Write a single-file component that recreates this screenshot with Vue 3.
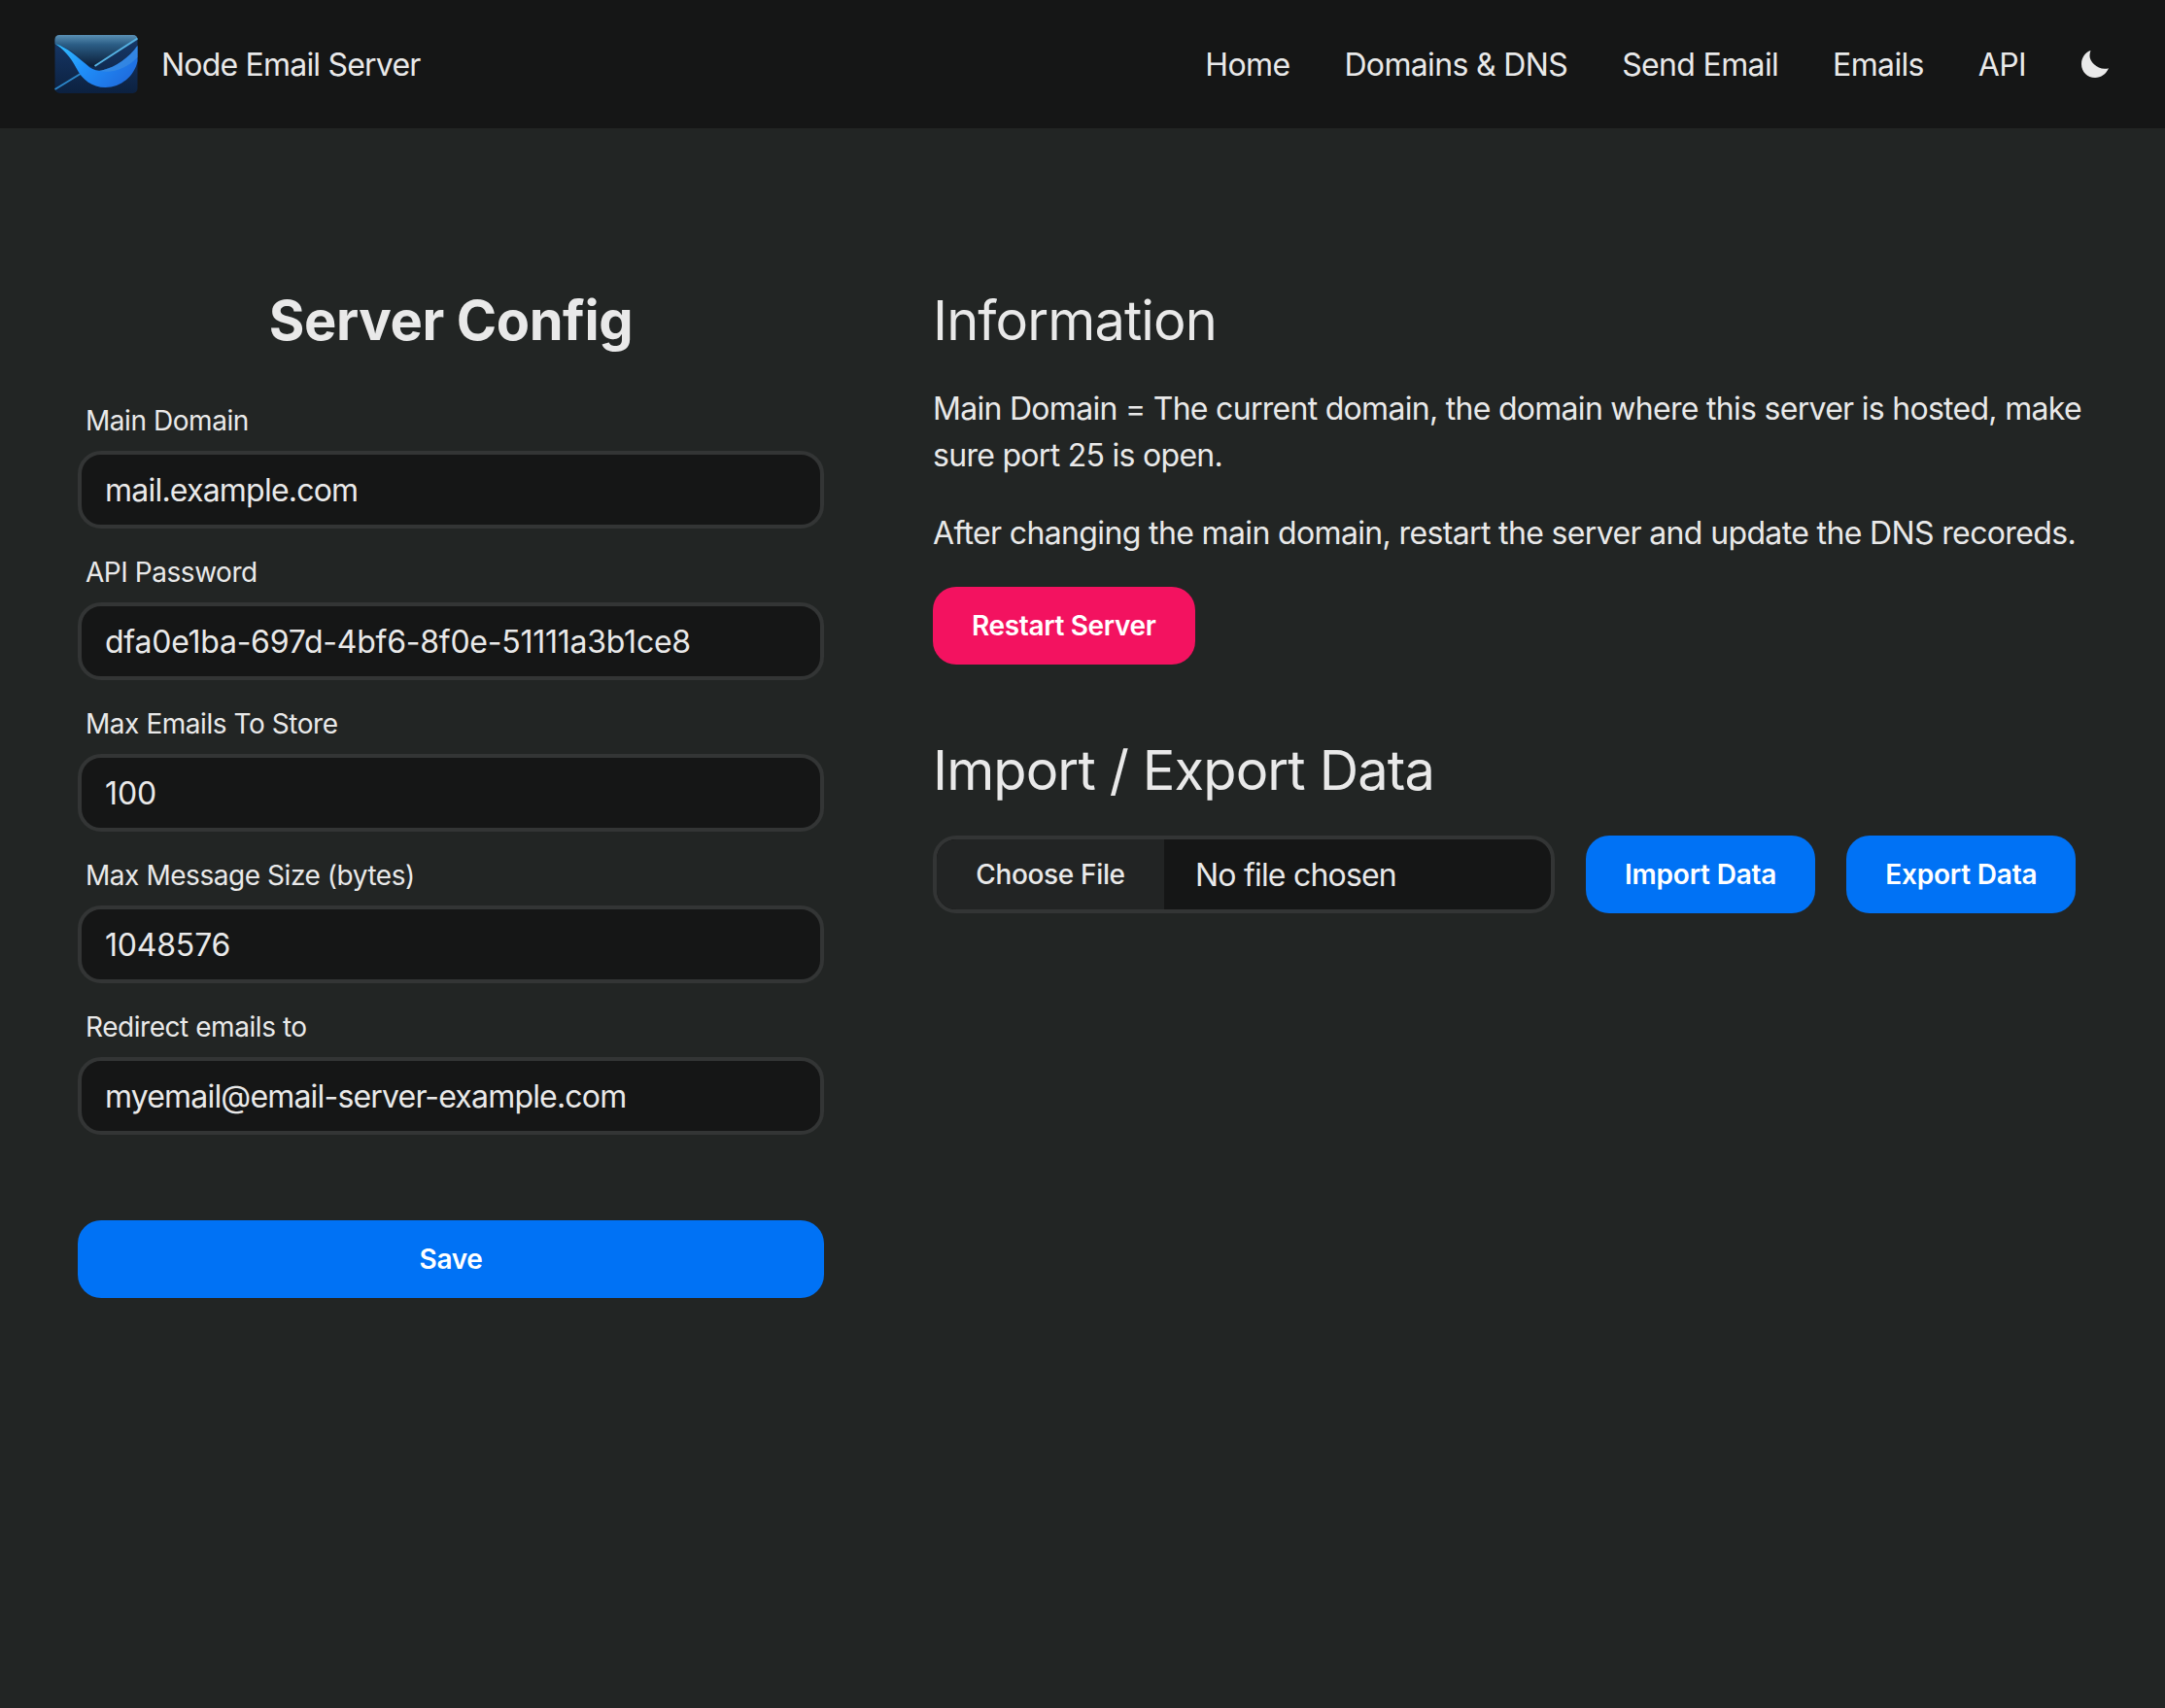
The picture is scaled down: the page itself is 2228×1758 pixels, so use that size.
<script setup>
const fields = [
  { label: 'Main Domain', value: 'mail.example.com', spacing: -0.78 },
  { label: 'API Password', value: 'dfa0e1ba-697d-4bf6-8f0e-51111a3b1ce8', spacing: -0.24 },
  { label: 'Max Emails To Store', value: '100', spacing: -0.13 },
  { label: 'Max Message Size (bytes)', value: '1048576', spacing: -0.2 },
  { label: 'Redirect emails to', value: 'myemail@email-server-example.com', spacing: -0.82 },
]
const links = ['Home', 'Domains & DNS', 'Send Email', 'Emails', 'API']
</script>

<template>
  <div class="page">
    <header class="nav">
      <a class="brand">
        <svg class="logo" viewBox="0 0 85 60" width="86" height="60">
          <defs>
            <linearGradient id="flap" x1="0" y1="0" x2="0" y2="1">
              <stop offset="0" stop-color="#5a90b4" />
              <stop offset="0.3" stop-color="#2b5d85" />
              <stop offset="1" stop-color="#0a1c36" />
            </linearGradient>
            <linearGradient id="body" x1="0" y1="0" x2="0" y2="1">
              <stop offset="0" stop-color="#17396a" />
              <stop offset="1" stop-color="#0c2140" />
            </linearGradient>
            <linearGradient id="swoosh" x1="0" y1="0" x2="1" y2="0.5">
              <stop offset="0" stop-color="#35c4ff" />
              <stop offset="0.5" stop-color="#1f8ffa" />
              <stop offset="1" stop-color="#1f6fe0" />
            </linearGradient>
          </defs>
          <rect width="85" height="60" rx="5" fill="url(#body)" />
          <path d="M0 5 Q0 0 5 0 H80 Q85 0 85 5 L41 33 Q36 33 32 30 Q18 14 0 9Z" fill="url(#flap)" />
          <path d="M0 56 L27 39.500" stroke="#2c86c8" stroke-width="2" fill="none" />
          <path d="M41 32 L85 3.500" stroke="#56b4e6" stroke-width="2" fill="none" />
          <path d="M0 9C14 13 24 24 32 30C38 36 44 38 50 36C62 33 76 24 85 11V27C82 42 68 54 52 54C38 54 28 46 22 34C16 22 8 14 0 9Z" fill="url(#swoosh)" />
          <path d="M50 36C62 33 76 24 85 11V23C74 34 60 40 46 37Z" fill="#3f8fe0" opacity="0.6" />
        </svg>
        <span class="brand-name">Node Email Server</span>
      </a>
      <nav class="links">
        <a v-for="link in links" :key="link" class="link">{{ link }}</a>
        <svg class="moon" viewBox="0 0 28 28" width="28" height="28">
          <path d="M9.500 0C3.800 1.800 0 7.500 0 14c0 8 6.200 14 14 14 6.200 0 11.500-4 14-9.800-1.200.4-2.500.5-4 .5C15.500 18.700 8.500 11.500 8.500 5.500c0-2 .3-3.800 1-5.500Z" fill="#e9e9e9" />
        </svg>
      </nav>
    </header>

    <main class="content">
      <section class="config">
        <h1 class="config-title">Server Config</h1>
        <div v-for="field in fields" :key="field.label" class="field">
          <label class="label">{{ field.label }}</label>
          <div class="input" :style="{ letterSpacing: field.spacing + 'px' }">{{ field.value }}</div>
        </div>
        <button class="btn btn-blue btn-save">Save</button>
      </section>

      <section class="info">
        <h2 class="heading">Information</h2>
        <p class="para para-first">Main Domain = The current domain, the domain where this server is hosted, make sure port 25 is open.</p>
        <p class="para para-last">After changing the main domain, restart the server and update the DNS recoreds.</p>
        <button class="btn btn-pink">Restart Server</button>
        <h2 class="heading heading-import">Import / Export Data</h2>
        <div class="data-row">
          <div class="file">
            <span class="file-button">Choose File</span>
            <span class="file-name">No file chosen</span>
          </div>
          <button class="btn btn-blue">Import Data</button>
          <button class="btn btn-blue">Export Data</button>
        </div>
      </section>
    </main>
  </div>
</template>

<style scoped>
.page {
  min-height: 1758px;
  background: #222524;
  color: #e9e9e9;
  font-family: Inter, "Liberation Sans", sans-serif;
  font-size: 32px;
}
.nav {
  height: 132px;
  box-sizing: border-box;
  background: #151616;
  padding: 0 58px 0 56px;
  display: flex;
  align-items: center;
  justify-content: space-between;
}
.brand {
  display: flex;
  align-items: center;
  gap: 24px;
}
.logo {
  display: block;
}
.brand-name {
  padding-top: 2px;
  font-size: 32px;
  line-height: 48px;
  letter-spacing: -0.8px;
}
.links {
  display: flex;
  align-items: center;
  gap: 56px;
}
.link {
  padding-top: 2px;
  font-size: 32px;
  line-height: 48px;
  letter-spacing: -0.65px;
}
.moon {
  display: block;
  margin-left: 1px;
}
.content {
  display: flex;
  padding: 0 56px;
}
.config {
  width: 768px;
  margin-left: 24px;
  padding-top: 156px;
  flex: none;
}
.config-title {
  margin: 0 0 40px;
  text-align: center;
  font-size: 56px;
  line-height: 84px;
  font-weight: 700;
  letter-spacing: -0.4px;
}
.field {
  margin-bottom: 24px;
}
.label {
  display: block;
  font-size: 28px;
  line-height: 42px;
  letter-spacing: -0.45px;
  padding-left: 8px;
  margin-bottom: 10px;
}
.input {
  height: 80px;
  box-sizing: border-box;
  background: #151616;
  border: 4px solid #333535;
  border-radius: 24px;
  padding: 0 24px;
  display: flex;
  align-items: center;
  font-size: 32px;
}
.btn {
  height: 80px;
  box-sizing: border-box;
  border: 0;
  border-radius: 24px;
  padding: 0 40px;
  color: #fff;
  font-family: inherit;
  font-size: 28px;
  font-weight: 600;
  letter-spacing: -0.35px;
}
.btn-blue {
  background: #0072f5;
  letter-spacing: -0.2px;
}
.btn-pink {
  background: #f31260;
}
.btn-save {
  display: block;
  width: 100%;
  margin-top: 88px;
  letter-spacing: -0.35px;
}
.info {
  margin-left: 112px;
  padding-top: 156px;
  flex: 1;
}
.heading {
  margin: 0 0 25px;
  font-size: 56px;
  line-height: 84px;
  font-weight: 400;
  letter-spacing: -0.9px;
}
.heading-import {
  margin-top: 67px;
  margin-bottom: 25px;
}
.para {
  margin: 0 0 32px;
  font-size: 32px;
  line-height: 48px;
}
.para-first {
  letter-spacing: -0.71px;
}
.para-last {
  margin-bottom: 31px;
  letter-spacing: -0.64px;
}
.data-row {
  display: flex;
  gap: 32px;
}
.file {
  width: 640px;
  height: 80px;
  box-sizing: border-box;
  border: 4px solid #333535;
  border-radius: 24px;
  background: #151616;
  display: flex;
  align-items: center;
  overflow: hidden;
}
.file-button {
  width: 234px;
  height: 100%;
  flex: none;
  background: #222424;
  display: flex;
  align-items: center;
  justify-content: center;
  font-size: 28px;
  font-weight: 500;
  letter-spacing: -0.35px;
}
.file-name {
  padding-left: 32px;
  font-size: 32px;
  letter-spacing: -0.8px;
}
</style>
